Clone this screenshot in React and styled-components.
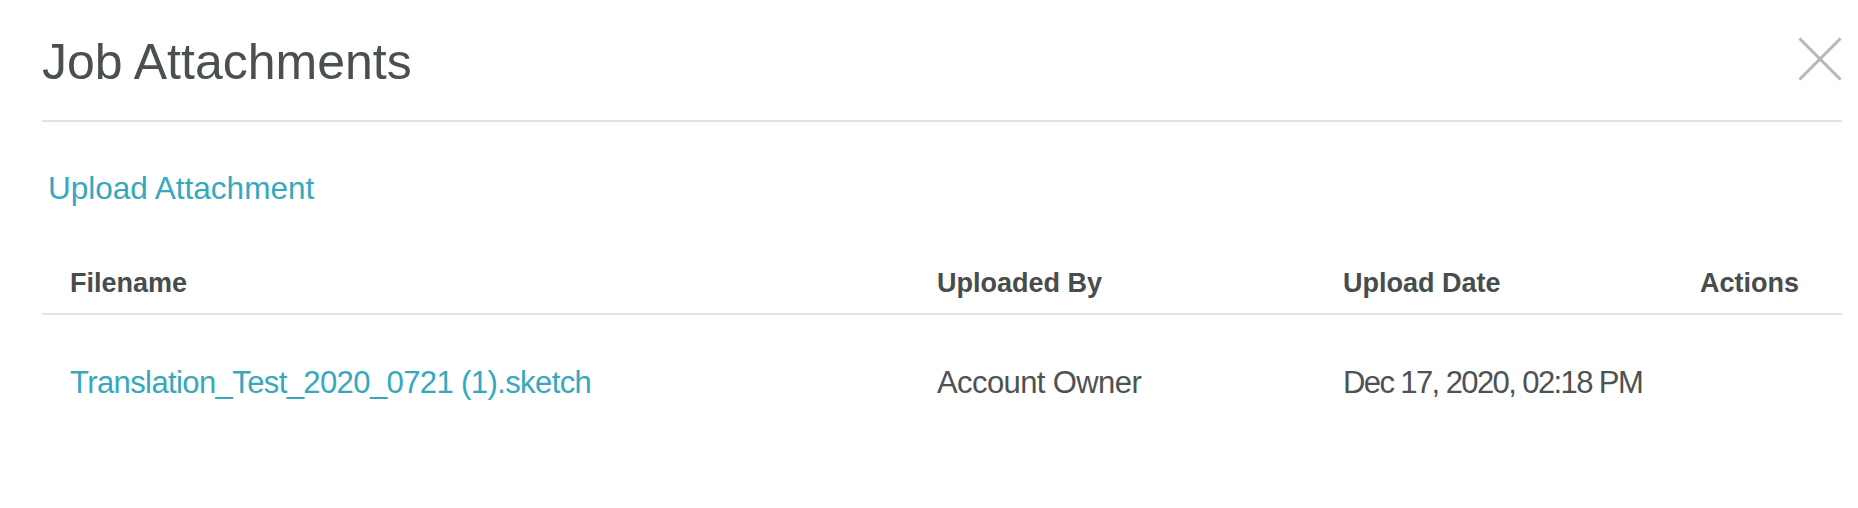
import React from "react";
import styled, { createGlobalStyle } from "styled-components";

const GlobalStyle = createGlobalStyle`
  html, body {
    margin: 0;
    padding: 0;
    background: #ffffff;
  }
  body {
    font-family: "Liberation Sans", Arial, sans-serif;
    color: #4b5051;
  }
`;

const Modal = styled.div`
  width: 1858px;
  height: 508px;
  box-sizing: border-box;
  padding: 32px 16px 0 42px;
  background: #ffffff;
`;

const Header = styled.div`
  display: flex;
  justify-content: space-between;
  align-items: flex-start;
  padding-bottom: 28px;
  border-bottom: 2px solid #e3e3e3;
`;

const Title = styled.h2`
  margin: 0;
  font-size: 50px;
  line-height: 60px;
  font-weight: 400;
  color: #4a4f50;
`;

const CloseButton = styled.button`
  margin-top: 5px;
  padding: 0;
  width: 44px;
  height: 44px;
  border: none;
  background: none;
  cursor: pointer;
  display: flex;
`;

const Body = styled.div`
  padding-top: 47px;
`;

const UploadLink = styled.a`
  display: inline-block;
  margin-left: 6px;
  font-size: 31.5px;
  line-height: 38px;
  color: #35a8c0;
  text-decoration: none;
  cursor: pointer;
`;

const Table = styled.div`
  margin-top: 60px;
  display: grid;
  grid-template-columns: 867px 406px 357px 170px;
`;

const HeadCell = styled.div`
  padding: 0 0 14px 28px;
  font-size: 27px;
  line-height: 32px;
  font-weight: 700;
  color: #474c4d;
  border-bottom: 2px solid #e3e3e3;
  white-space: nowrap;
`;

const Cell = styled.div`
  padding: 49px 0 0 28px;
  font-size: 31px;
  line-height: 38px;
  letter-spacing: ${(p) => (p.$tight ? "-1.6px" : "-0.6px")};
  color: ${(p) => (p.$link ? "#35a8c0" : "#4d5253")};
  white-space: nowrap;
`;

const CloseIcon = () => (
  <svg width="44" height="44" viewBox="0 0 44 44">
    <path
      d="M1.5 1.5 L42.5 42.5 M42.5 1.5 L1.5 42.5"
      stroke="#b2b7b7"
      strokeWidth="3"
      fill="none"
    />
  </svg>
);

const columns = ["Filename", "Uploaded By", "Upload Date", "Actions"];

const rows = [
  {
    file: "Translation_Test_2020_0721 (1).sketch",
    by: "Account Owner",
    date: "Dec 17, 2020, 02:18 PM",
  },
];

export default function App() {
  return (
    <>
      <GlobalStyle />
      <Modal>
        <Header>
          <Title>Job Attachments</Title>
          <CloseButton aria-label="Close">
            <CloseIcon />
          </CloseButton>
        </Header>
        <Body>
          <UploadLink>Upload Attachment</UploadLink>
          <Table>
            {columns.map((c) => (
              <HeadCell key={c}>{c}</HeadCell>
            ))}
            {rows.map((r) => (
              <React.Fragment key={r.file}>
                <Cell $link>{r.file}</Cell>
                <Cell>{r.by}</Cell>
                <Cell $tight>{r.date}</Cell>
                <Cell />
              </React.Fragment>
            ))}
          </Table>
        </Body>
      </Modal>
    </>
  );
}
